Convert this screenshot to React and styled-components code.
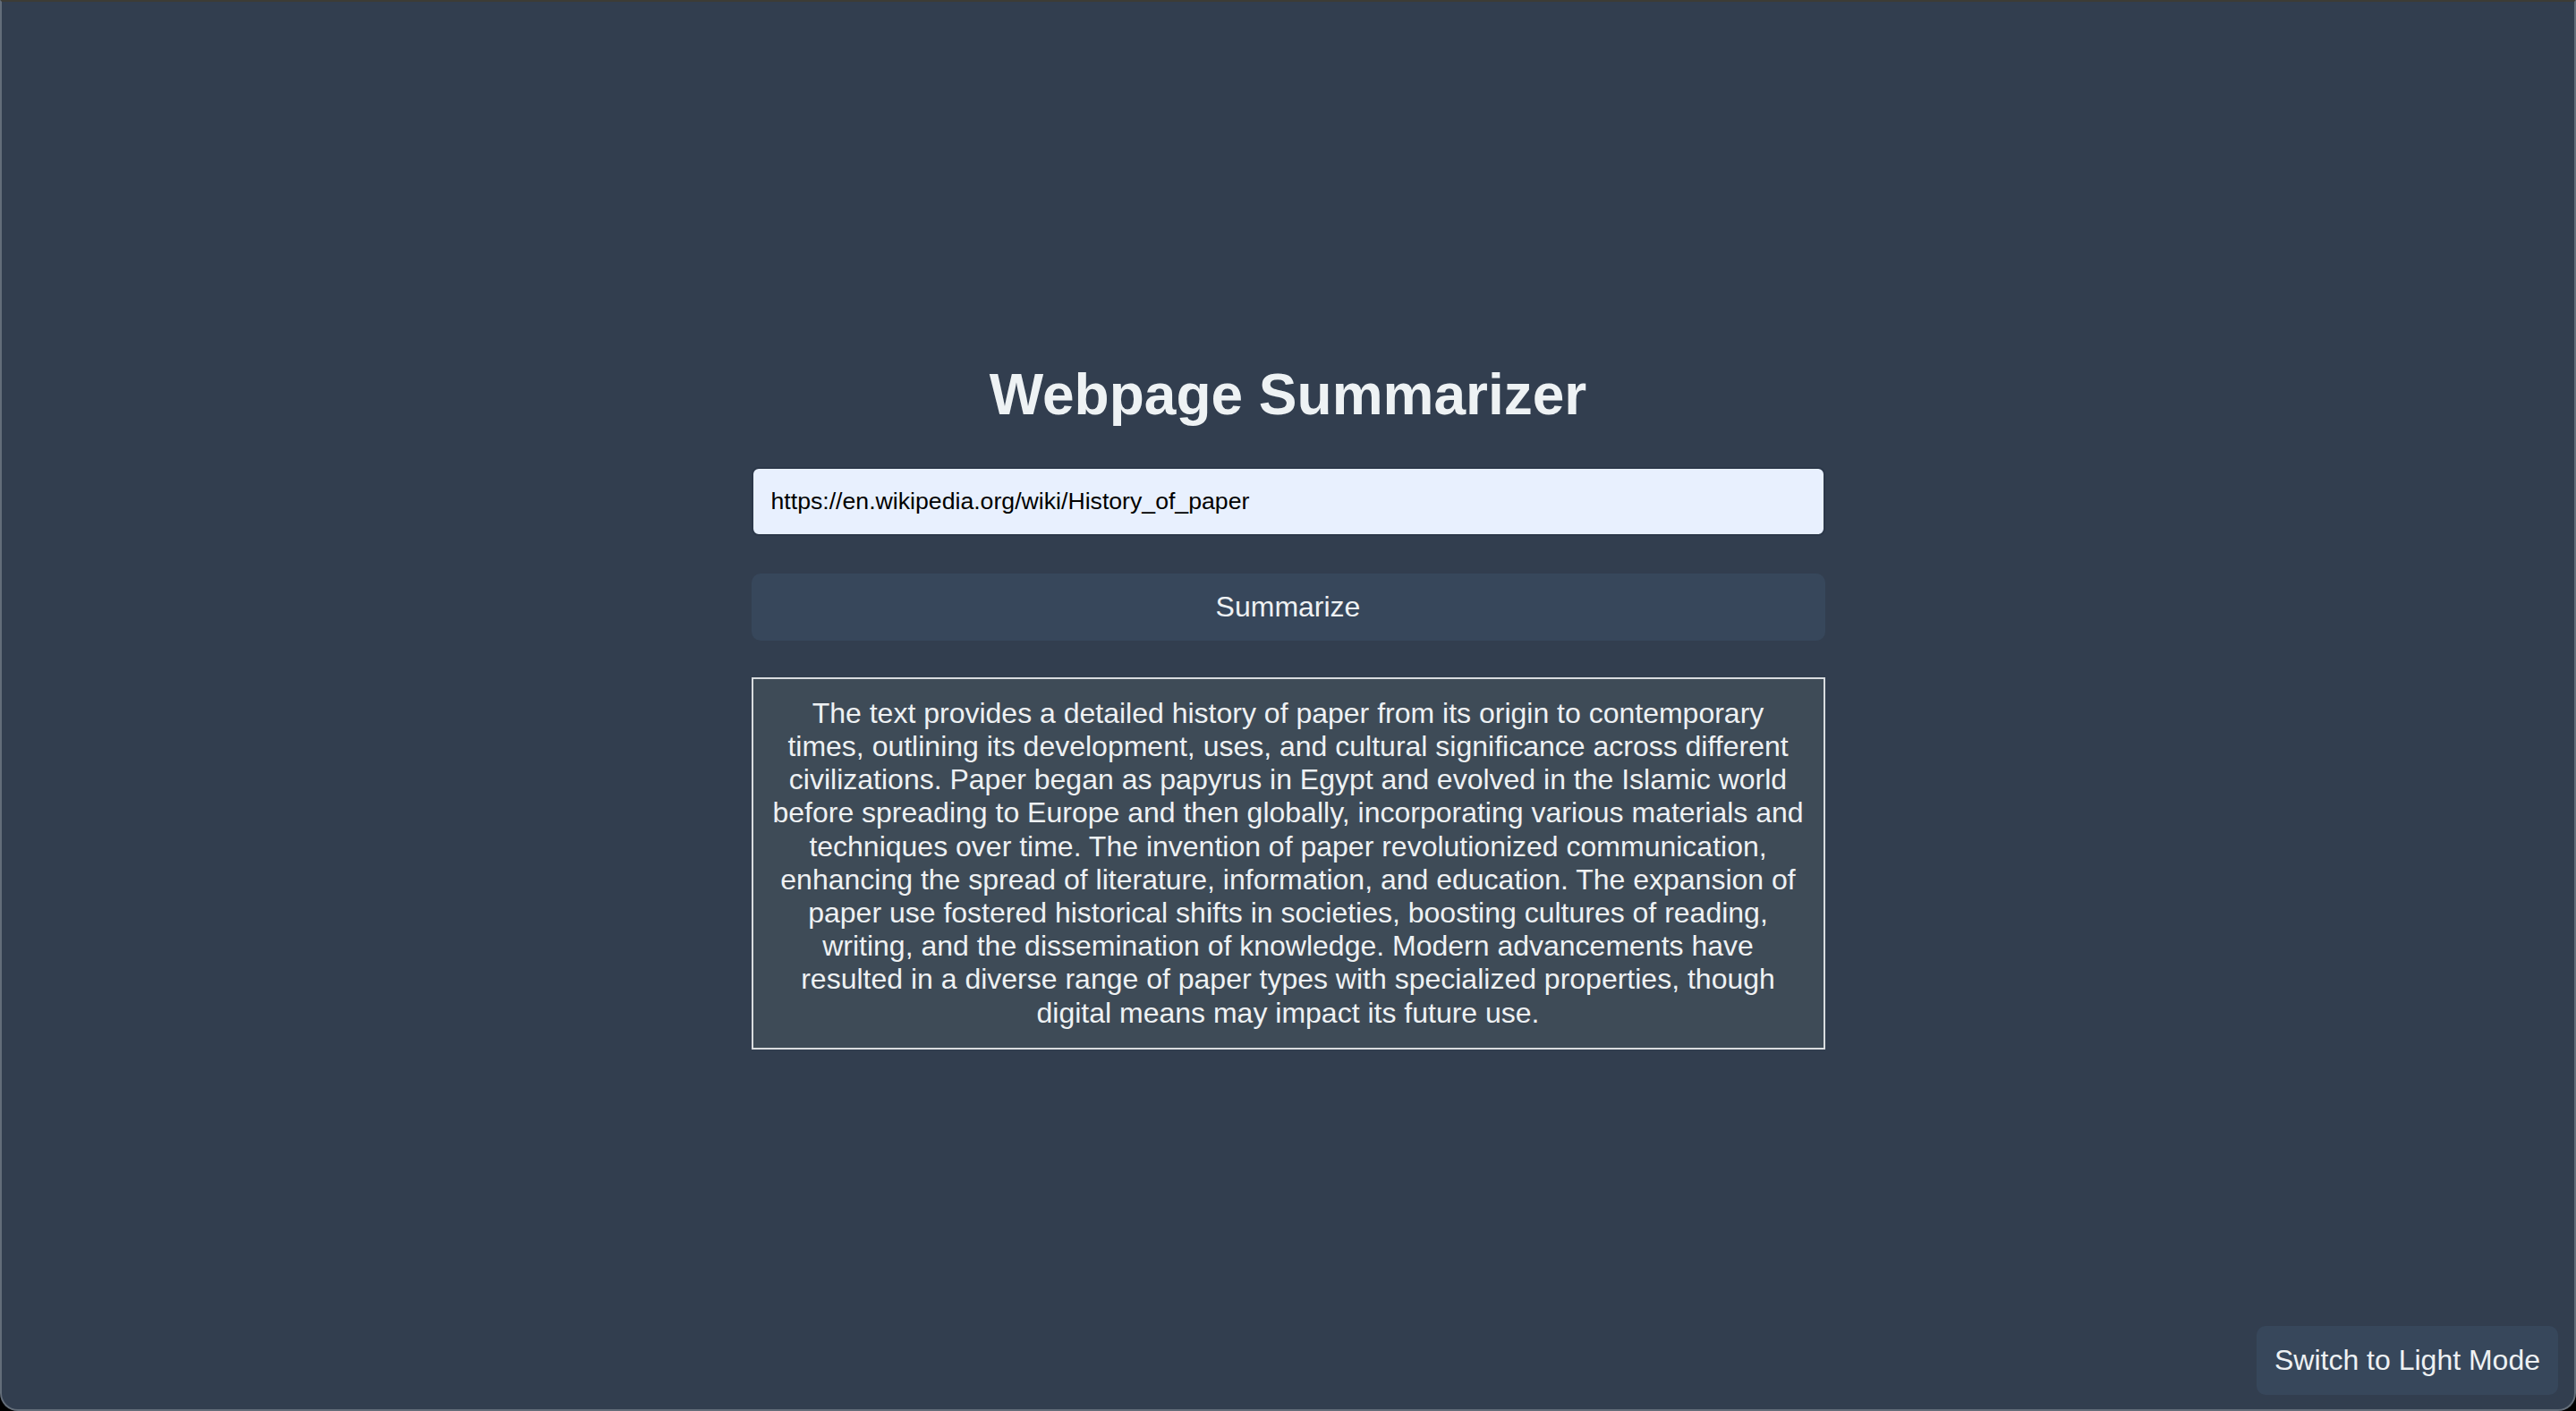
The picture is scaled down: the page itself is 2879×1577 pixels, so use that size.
import React, { useState } from "react";
import styled, { createGlobalStyle } from "styled-components";

const summaryText =
	"The text provides a detailed history of paper from its origin to contemporary times, outlining its development, uses, and cultural significance across different civilizations. Paper began as papyrus in Egypt and evolved in the Islamic world before spreading to Europe and then globally, incorporating various materials and techniques over time. The invention of paper revolutionized communication, enhancing the spread of literature, information, and education. The expansion of paper use fostered historical shifts in societies, boosting cultures of reading, writing, and the dissemination of knowledge. Modern advancements have resulted in a diverse range of paper types with specialized properties, though digital means may impact its future use.";

const GlobalStyle = createGlobalStyle`
	html, body {
		margin: 0;
		padding: 0;
		background: #000;
	}
	* {
		box-sizing: border-box;
	}
`;

const Frame = styled.div`
	height: 100vh;
	display: flex;
	flex-direction: column;
	align-items: center;
	justify-content: center;
	background: #323e4f;
	border: 2px solid #636d79;
	border-top-color: #3d3c36;
	border-radius: 0 0 20px 20px;
	font-family: "Liberation Sans", Arial, sans-serif;
	color: #eef1f3;
`;

const Container = styled.div`
	width: 1200px;
	display: flex;
	flex-direction: column;
	align-items: stretch;
	margin-bottom: 42px;
`;

const Title = styled.h1`
	margin: 43px 0;
	font-size: 64px;
	font-weight: bold;
	text-align: center;
	line-height: 73.6px;
	color: #eef2f4;
`;

const UrlInput = styled.input`
	width: 100%;
	height: 77px;
	margin: 0 0 42px;
	padding: 0 20px;
	border: 2px solid #2c3849;
	border-radius: 8px;
	background: #e8f0fe;
	color: #000;
	font-family: "Liberation Sans", Arial, sans-serif;
	font-size: 26.67px;
	outline: none;
`;

const Button = styled.button`
	height: ${(p) => (p.$compact ? "77px" : "75px")};
	padding: 0 20px;
	border: none;
	border-radius: 10px;
	background: #37475b;
	color: #eef1f3;
	font-family: "Liberation Sans", Arial, sans-serif;
	font-size: 32px;
	cursor: pointer;
`;

const SummarizeButton = styled(Button)`
	width: 100%;
	margin-bottom: 41px;
`;

const ModeToggle = styled(Button)`
	position: fixed;
	right: 20px;
	bottom: 18px;
`;

const Summary = styled.div`
	padding: 20px;
	border: 2px solid #d9dcdf;
	background: #3e4b57;
	font-size: 32px;
	line-height: 37.2px;
	text-align: center;
	color: #eef1f3;
`;

const App = () => {
	const [url, setUrl] = useState("https://en.wikipedia.org/wiki/History_of_paper");

	return (
		<>
			<GlobalStyle />
			<Frame>
				<Container>
					<Title>Webpage Summarizer</Title>
					<UrlInput value={url} onChange={(e) => setUrl(e.target.value)} />
					<SummarizeButton>Summarize</SummarizeButton>
					<Summary>{summaryText}</Summary>
				</Container>
				<ModeToggle $compact>Switch to Light Mode</ModeToggle>
			</Frame>
		</>
	);
};

export default App;
